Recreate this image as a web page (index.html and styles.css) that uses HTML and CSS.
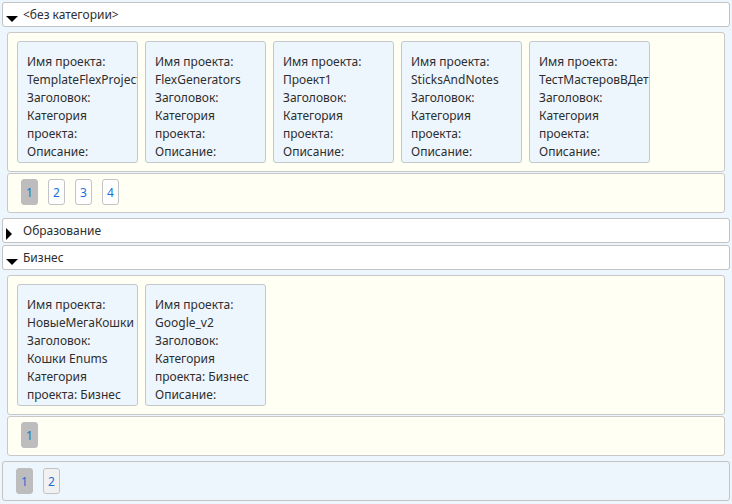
FILE: index.html
```html
<!DOCTYPE html>
<html lang="ru">
<head>
<meta charset="utf-8">
<title>Проекты</title>
<link rel="stylesheet" href="styles.css">
</head>
<body>
<div class="group">
  <div class="header">
    <svg class="tri" width="12" height="16" viewBox="0 0 12 16"><polygon points="0,7 12,7 6,13" fill="#000"/></svg>
    <span>&lt;без категории&gt;</span>
  </div>
  <div class="group-body">
    <div class="panel cards">
      <div class="card">
        <div>Имя проекта: TemplateFlexProject</div>
        <div>Заголовок:</div>
        <div>Категория проекта:</div>
        <div>Описание:</div>
      </div>
      <div class="card">
        <div>Имя проекта: FlexGenerators</div>
        <div>Заголовок:</div>
        <div>Категория проекта:</div>
        <div>Описание:</div>
      </div>
      <div class="card">
        <div>Имя проекта: Проект1</div>
        <div>Заголовок:</div>
        <div>Категория проекта:</div>
        <div>Описание:</div>
      </div>
      <div class="card">
        <div>Имя проекта: SticksAndNotes</div>
        <div>Заголовок:</div>
        <div>Категория проекта:</div>
        <div>Описание:</div>
      </div>
      <div class="card">
        <div>Имя проекта: ТестМастеровВДетях</div>
        <div>Заголовок:</div>
        <div>Категория проекта:</div>
        <div>Описание:</div>
      </div>
    </div>
    <div class="panel pager">
      <span class="page-btn active">1</span>
      <span class="page-btn">2</span>
      <span class="page-btn">3</span>
      <span class="page-btn">4</span>
    </div>
  </div>
</div>
<div class="group">
  <div class="header">
    <svg class="tri" width="12" height="16" viewBox="0 0 12 16"><polygon points="0,3 6,9 0,15" fill="#000"/></svg>
    <span>Образование</span>
  </div>
</div>
<div class="group">
  <div class="header">
    <svg class="tri" width="12" height="16" viewBox="0 0 12 16"><polygon points="0,7 12,7 6,13" fill="#000"/></svg>
    <span>Бизнес</span>
  </div>
  <div class="group-body">
    <div class="panel cards">
      <div class="card">
        <div>Имя проекта: НовыеМегаКошки</div>
        <div>Заголовок: Кошки Enums</div>
        <div>Категория проекта: Бизнес</div>
        <div>Описание:</div>
      </div>
      <div class="card">
        <div>Имя проекта: Google_v2</div>
        <div>Заголовок:</div>
        <div>Категория проекта: Бизнес</div>
        <div>Описание:</div>
      </div>
    </div>
    <div class="panel pager">
      <span class="page-btn active">1</span>
    </div>
  </div>
</div>
<div class="outer-pager">
  <span class="page-btn active">1</span>
  <span class="page-btn light">2</span>
</div>
</body>
</html>
```

FILE: styles.css
```css
html, body {
  margin: 0;
  background: #eef6fd;
}
body {
  padding: 2px 2px 0 2px;
  font-family: "Noto Sans", "DejaVu Sans", sans-serif;
  font-size: 12px;
  color: #2e2e2e;
}
.group {
  margin-bottom: 2px;
}
.header {
  box-sizing: border-box;
  height: 25px;
  border: 1px solid #c2c2c2;
  border-radius: 3px;
  background: #fff;
  display: flex;
  align-items: center;
  padding-left: 3px;
  gap: 5px;
}
.tri {
  flex: none;
  margin-top: 4px;
}
.group-body {
  padding: 5px 5px 3px 5px;
  display: flex;
  flex-direction: column;
  gap: 1px;
}
.panel {
  box-sizing: border-box;
  background: #fffff3;
  border: 1px solid #c8c8c8;
  border-radius: 3px;
}
.cards {
  height: 140px;
  padding: 8px 9px;
  display: flex;
  gap: 7px;
}
.card {
  box-sizing: border-box;
  width: 121px;
  height: 122px;
  flex: none;
  border: 1px solid #c3c7cc;
  border-radius: 3px;
  background: #eef6fd;
  padding: 11px 12px 0 9px;
  overflow: hidden;
  line-height: 18px;
}
.pager {
  height: 40px;
  padding: 5px 13px;
  display: flex;
  gap: 10px;
  align-items: flex-start;
}
.outer-pager {
  box-sizing: border-box;
  height: 40px;
  margin-top: 1px;
  border: 1px solid #c3c3c3;
  border-radius: 3px;
  background: #eef6fd;
  padding: 6px 13px;
  display: flex;
  gap: 10px;
  align-items: flex-start;
}
.page-btn {
  box-sizing: border-box;
  width: 17px;
  height: 26px;
  border: 1px solid #c3c3c3;
  border-radius: 3px;
  background: #fff;
  color: #1a6fd6;
  display: flex;
  align-items: center;
  justify-content: center;
}
.page-btn.active {
  background: #bdbdbd;
  border-color: #bdbdbd;
}
.page-btn.light {
  background: #f1f1f1;
}
```
